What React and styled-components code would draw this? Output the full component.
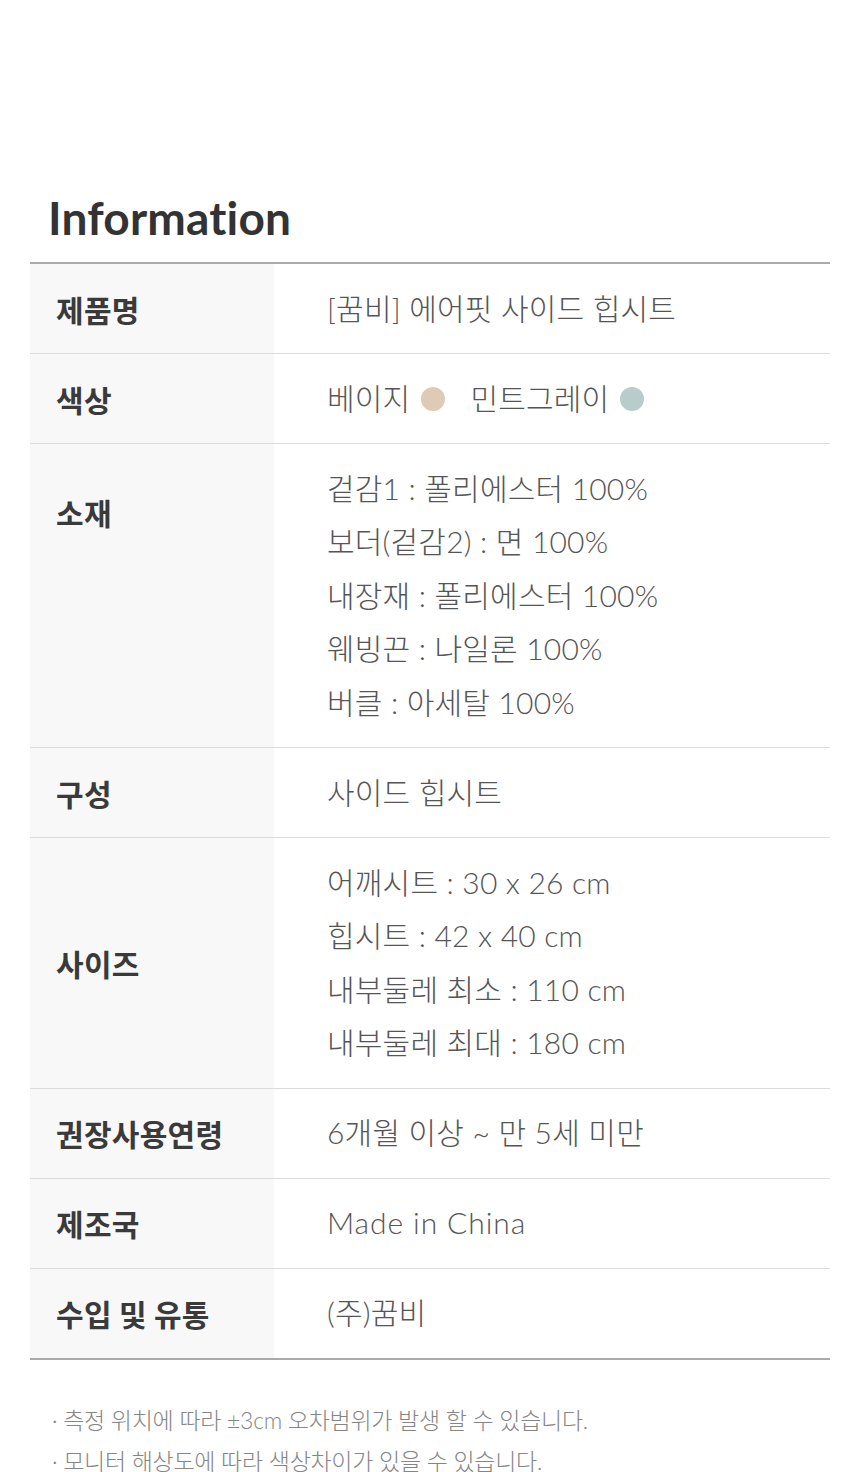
import React from "react";
import styled, { createGlobalStyle } from "styled-components";

const Global = createGlobalStyle`
  html, body { margin: 0; padding: 0; background: #fff; }
  body { font-family: "Noto Sans CJK KR", "Noto Sans", sans-serif; }
`;

const Page = styled.div`
  width: 860px;
  padding: 190px 30px 0;
  box-sizing: border-box;
`;

const Title = styled.h1`
  margin: 0 0 17px 18px;
  font-family: "Lato", "Noto Sans", sans-serif;
  font-weight: 700;
  font-size: 46px;
  line-height: 55px;
  color: #333;
  letter-spacing: 0.2px;
`;

const Table = styled.div`
  border-top: 2px solid #aaa;
  border-bottom: 2px solid #aaa;
`;

const Row = styled.div`
  display: grid;
  grid-template-columns: 244px 1fr;
  border-top: ${(p) => (p.$first ? "none" : "1px solid #dcdcdc")};
`;

const Label = styled.div`
  background: #f8f8f8;
  padding: ${(p) => (p.$top ? "48px 0 0 26px" : "0 0 0 26px")};
  display: flex;
  align-items: ${(p) => (p.$top ? "flex-start" : "center")};
  font-size: 30px;
  font-weight: 700;
  color: #3a3a3a;
  letter-spacing: 0.3px;
  line-height: 40px;
`;

const Value = styled.div`
  padding: 17.75px 0 17.75px 53px;
  font-family: "Lato", "Noto Sans CJK KR", sans-serif;
  font-size: 30px;
  font-weight: 300;
  color: #555;
  letter-spacing: 0.2px;
  line-height: 53.5px;
`;

const Line = styled.div`
  display: flex;
  align-items: center;
  white-space: pre;
  letter-spacing: ${(p) => (p.$latin ? "0.9px" : "inherit")};
`;

const Dot = styled.span`
  display: inline-block;
  width: 24px;
  height: 24px;
  border-radius: 50%;
  background: ${(p) => p.$color};
  margin: 0 ${(p) => p.$after}px 0 11px;
`;

const Notes = styled.div`
  padding: 40px 0 0 22px;
  font-family: "Lato", "Noto Sans CJK KR", sans-serif;
  font-size: 23px;
  font-weight: 300;
  color: #858585;
  letter-spacing: -0.3px;
  line-height: 41px;
`;

const rows = [
  { label: "제품명", lines: ["[꿈비] 에어핏 사이드 힙시트"] },
  { label: "색상", colors: true },
  {
    label: "소재",
    top: true,
    lines: [
      "겉감1 : 폴리에스터 100%",
      "보더(겉감2) : 면 100%",
      "내장재 : 폴리에스터 100%",
      "웨빙끈 : 나일론 100%",
      "버클 : 아세탈 100%",
    ],
  },
  { label: "구성", lines: ["사이드 힙시트"] },
  {
    label: "사이즈",
    lines: [
      "어깨시트 : 30 x 26 cm",
      "힙시트 : 42 x 40 cm",
      "내부둘레 최소 : 110 cm",
      "내부둘레 최대 : 180 cm",
    ],
  },
  { label: "권장사용연령", lines: ["6개월 이상 ~ 만 5세 미만"] },
  { label: "제조국", lines: ["Made in China"], latin: true },
  { label: "수입 및 유통", lines: ["(주)꿈비"] },
];

export default function App() {
  return (
    <Page>
      <Global />
      <Title>Information</Title>
      <Table>
        {rows.map((r, i) => (
          <Row key={r.label} $first={i === 0}>
            <Label $top={r.top}>{r.label}</Label>
            <Value>
              {r.colors ? (
                <Line>
                  베이지
                  <Dot $color="#dfcbb5" $after={25} />
                  민트그레이
                  <Dot $color="#b7cccb" $after={0} />
                </Line>
              ) : (
                r.lines.map((l) => (
                  <Line key={l} $latin={r.latin}>
                    {l}
                  </Line>
                ))
              )}
            </Value>
          </Row>
        ))}
      </Table>
      <Notes>
        <div>· 측정 위치에 따라 ±3cm 오차범위가 발생 할 수 있습니다.</div>
        <div>· 모니터 해상도에 따라 색상차이가 있을 수 있습니다.</div>
      </Notes>
    </Page>
  );
}
